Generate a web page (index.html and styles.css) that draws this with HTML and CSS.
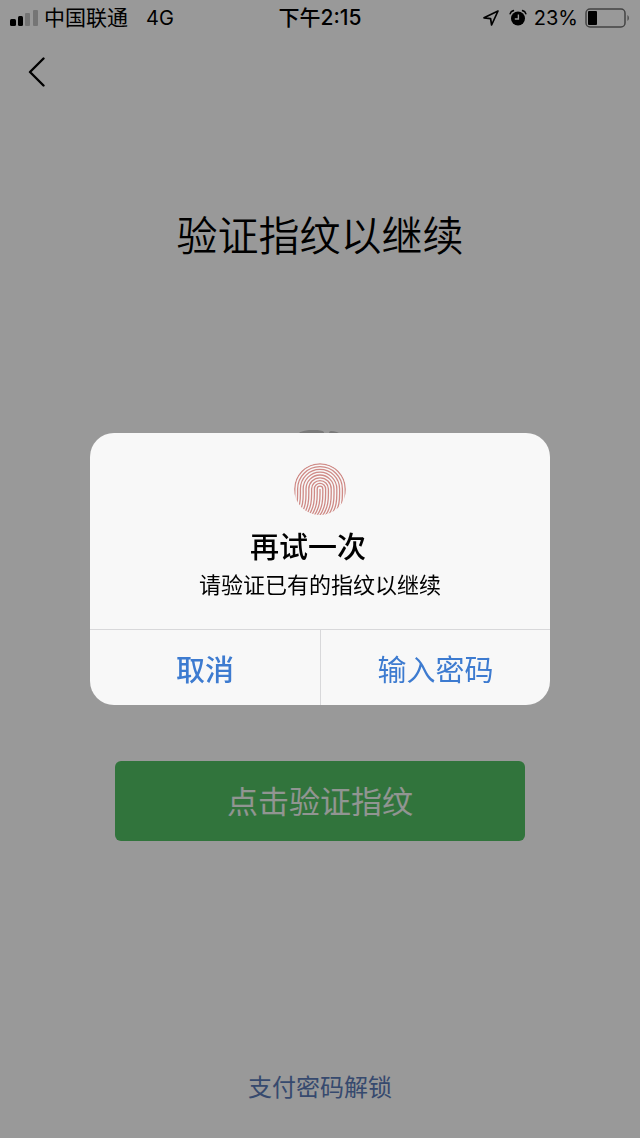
FILE: index.html
```html
<!DOCTYPE html>
<html lang="zh-CN">
<head>
<meta charset="utf-8">
<meta name="viewport" content="width=device-width, initial-scale=1">
<title>验证指纹</title>
<link rel="stylesheet" href="styles.css">
</head>
<body>
<div class="page">
  <header class="status">
    <div class="status-left">
      <svg class="signal" width="30" height="18" viewBox="0 0 30 18" aria-hidden="true">
        <rect x="1" y="10" width="6" height="7" rx="1.5"/>
        <rect x="9" y="7" width="5" height="10" rx="1.5"/>
        <rect class="dim" x="16" y="4" width="5" height="13" rx="1"/>
        <rect class="dim" x="24" y="1" width="5" height="16" rx="1"/>
      </svg>
      <span class="carrier">中国联通</span>
      <span>4G</span>
    </div>
    <time class="clock">下午2:15</time>
    <div class="status-right">
      <svg width="18" height="18" viewBox="0 0 18 18" aria-hidden="true">
        <path d="M16 2 L2 8.8 L8.6 9.6 L9.6 16 Z" fill="none" stroke="#000" stroke-width="1.7" stroke-linejoin="round"/>
      </svg>
      <svg class="alarm" width="18" height="18" viewBox="0 0 18 18" aria-hidden="true">
        <circle cx="9" cy="9.5" r="7"/>
        <path d="M1.2 4.6 A4 4 0 0 1 4.4 1.6 M13.6 1.6 A4 4 0 0 1 16.8 4.6" fill="none" stroke="#000" stroke-width="1.6" stroke-linecap="round"/>
        <path d="M9.4 5.4 V10 H5.8" fill="none" stroke="#fff" stroke-width="1.4"/>
      </svg>
      <span>23%</span>
      <svg width="46" height="20" viewBox="0 0 46 20" aria-hidden="true">
        <rect x="1" y="1" width="39" height="18" rx="4" fill="none" stroke="#707070" stroke-width="1.5"/>
        <rect x="3" y="3" width="9" height="14" rx="1"/>
        <path d="M42.500 7 A4 4 0 0 1 42.500 13 Z" fill="#707070"/>
      </svg>
    </div>
  </header>

  <nav class="nav">
    <button class="back" type="button" aria-label="返回">
      <svg width="18" height="30" viewBox="0 0 18 30" aria-hidden="true">
        <path d="M15.500 1.500 L2 15 L15.500 28.500" fill="none" stroke="#000" stroke-width="2.4" stroke-linecap="round" stroke-linejoin="round"/>
      </svg>
    </button>
  </nav>

  <main class="content">
    <h1 class="heading">验证指纹以继续</h1>
    <svg class="touch" width="100" height="112" viewBox="0 0 100 112" aria-hidden="true">
      <path d="M31 4 Q42 0 52 3 M61 3 Q66 3 72 7 M16 52 C16 8 84 8 84 52 V70 M28 86 V54 C28 24 72 24 72 54 V90 M42 100 V56 C42 42 58 42 58 56 V104" fill="none" stroke="#cacaca" stroke-width="4" stroke-linecap="round"/>
    </svg>
    <button class="verify" type="button">点击验证指纹</button>
  </main>

  <footer class="footer">
    <a class="unlock" href="#">支付密码解锁</a>
  </footer>
</div>

<div class="overlay">
  <section class="dialog" role="dialog" aria-modal="true" aria-labelledby="dialog-title" aria-describedby="dialog-text">
    <div class="dialog-body">
      <svg class="print" width="52" height="52" viewBox="0 0 52 52" aria-hidden="true">
        <defs><clipPath id="disc"><circle cx="26" cy="26" r="26"/></clipPath></defs>
        <g clip-path="url(#disc)">
          <path d="M-6.200 54 C1.800 44 0.800 34 0.800 26 A25.200 25.200 0 0 1 51.200 26 C51.200 34 52.200 44 44.200 54"/>
          <path d="M-3.400 54 C4.600 44 3.600 34 3.600 26 A22.400 22.400 0 0 1 48.400 26 C48.400 34 49.400 44 41.400 54"/>
          <path d="M-0.600 54 C7.400 44 6.400 34 6.400 26 A19.600 19.600 0 0 1 45.600 26 C45.600 34 46.600 44 38.600 54"/>
          <path d="M2.200 54 C10.200 44 9.200 34 9.200 26 A16.800 16.800 0 0 1 42.800 26 C42.800 34 43.800 44 35.800 54"/>
          <path d="M5 54 C13 44 12 34 12 26 A14 14 0 0 1 40 26 C40 34 41 44 33 54"/>
          <path d="M7.800 54 C15.800 44 14.800 34 14.800 26 A11.200 11.200 0 0 1 37.200 26 C37.200 34 38.200 44 30.200 54"/>
          <path d="M10.600 54 C18.600 44 17.600 34 17.600 26 A8.400 8.400 0 0 1 34.400 26 C34.400 34 35.400 44 27.400 54"/>
          <path d="M13.400 54 C21.400 44 20.400 34 20.400 26 A5.600 5.600 0 0 1 31.600 26 C31.600 34 32.600 44 24.600 54"/>
          <path d="M16.200 54 C24.200 44 23.200 34 23.200 26 A2.800 2.800 0 0 1 28.800 26 C28.800 34 29.800 44 21.800 54"/>
          <path d="M26 26 C26 34 27 44 19 54"/>
        </g>
      </svg>
      <h2 class="dialog-title" id="dialog-title">再试一次</h2>
      <p class="dialog-text" id="dialog-text">请验证已有的指纹以继续</p>
    </div>
    <div class="actions">
      <button class="action cancel" type="button">取消</button>
      <button class="action" type="button">输入密码</button>
    </div>
  </section>
</div>
</body>
</html>
```
FILE: styles.css
```css
* {
  box-sizing: border-box;
}

body {
  margin: 0;
  background: #fff;
  color: #000;
  font-family: Inter, "Noto Sans CJK SC", sans-serif;
}

button {
  border: 0;
  background: none;
  font: inherit;
  cursor: pointer;
}

svg {
  display: block;
  flex: none;
}

.page {
  min-height: 100vh;
  display: flex;
  flex-direction: column;
}

.status {
  display: grid;
  grid-template-columns: 1fr auto 1fr;
  align-items: center;
  height: 36px;
  padding: 0 9px;
  font-size: 20px;
  line-height: 36px;
}

.status-left,
.status-right {
  display: flex;
  align-items: center;
}

.status-right {
  justify-content: flex-end;
  gap: 7px;
}

.signal .dim {
  fill: #c4c4c4;
}

.carrier {
  margin: 0 18px 0 5px;
  font-size: 21px;
}

.clock {
  font-weight: 500;
  font-size: 21px;
}

.alarm {
  margin-left: 2px;
}

.nav {
  height: 72px;
  padding: 16px 20px;
}

.back {
  display: block;
  padding: 5px 8px;
}

.content {
  display: flex;
  flex-direction: column;
  align-items: center;
  padding: 96px 115px 0;
}

.heading {
  margin: 0;
  font-family: "Noto Sans CJK SC", sans-serif;
  font-size: 41px;
  font-weight: 350;
  line-height: 58px;
}

.touch {
  margin-top: 168px;
}

.verify {
  width: 100%;
  height: 80px;
  margin-top: 219px;
  padding: 0 0 4px;
  border-radius: 6px;
  background: #53c164;
  color: #f2f8f3;
  font-size: 31px;
}

.footer {
  margin-top: auto;
  padding-bottom: 32px;
  text-align: center;
}

.unlock {
  color: #5a7bb8;
  font-size: 24px;
  line-height: 36px;
  text-decoration: none;
}

.overlay {
  position: fixed;
  inset: 0;
  display: flex;
  align-items: center;
  justify-content: center;
  padding: 0 24px;
  background: rgba(0, 0, 0, 0.4);
}

.dialog {
  width: 100%;
  max-width: 460px;
  overflow: hidden;
  border-radius: 24px;
  background: #f8f8f8;
}

.dialog-body {
  display: flex;
  flex-direction: column;
  align-items: center;
  padding: 30px 24px 28px;
}

.print path {
  fill: none;
  stroke: #cf8a86;
  stroke-width: 1.3;
}

.dialog-title {
  margin: 12px 0 0;
  padding-right: 24px;
  font-size: 29px;
  font-weight: 500;
  line-height: 42px;
}

.dialog-text {
  margin: 0;
  font-size: 22px;
  line-height: 32px;
}

.actions {
  display: grid;
  grid-template-columns: 1fr 1fr;
  border-top: 1px solid #d8d8da;
}

.action {
  height: 75px;
  padding: 0;
  color: #3d7bd0;
  font-size: 29px;
}

.action + .action {
  border-left: 1px solid #d8d8da;
}

.cancel {
  font-weight: 500;
}
```
